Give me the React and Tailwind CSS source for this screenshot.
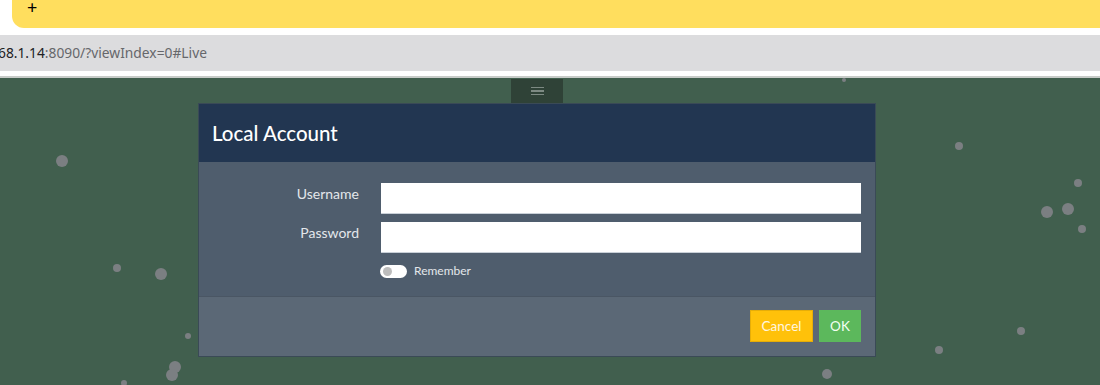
import React from "react";

const dots = [
  [62, 161, 6], [117, 268, 4], [161, 274, 6], [188, 336, 3], [175, 367, 6], [172, 375, 6],
  [124, 383, 3], [959, 146, 4], [1078, 183, 4], [1047, 212, 6], [1068, 209, 6], [1082, 229, 4],
  [1021, 331, 4], [939, 350, 4], [827, 374, 5], [844, 80, 2],
];

export default function App() {
  return (
    <div className="w-[1100px] h-[385px] overflow-hidden flex flex-col bg-white relative">
      <div className="h-[35px] bg-white pl-[12px] shrink-0">
        <div className="h-[28px] bg-[#ffde5e] rounded-bl-[12px] pl-[15px] flex items-start">
          <span className="text-[18px] leading-[15px] text-black font-['Noto_Sans',sans-serif]">+</span>
        </div>
      </div>
      <div className="h-[36px] bg-[#dcdcde] flex items-center shrink-0 font-['Noto_Sans',sans-serif] text-[13.8px] -ml-[2px]">
        <span className="text-[#202124]">68.1.14</span>
        <span className="text-[#66676b]">:8090/?viewIndex=0#Live</span>
      </div>
      <div className="h-[5px] bg-white shrink-0" />
      <div className="h-[2px] bg-[#c8ccc9] shrink-0" />
      <div className="flex-1 bg-[#415f4e] flex flex-col font-['Lato',sans-serif]">
        <div className="ml-[511px] mt-[1px] w-[52px] h-[24px] bg-[#2f4237] flex flex-col items-center justify-center gap-[2px]">
          <div className="w-[13px] h-[1.5px] bg-[#7d8a83]" />
          <div className="w-[13px] h-[1.5px] bg-[#7d8a83]" />
          <div className="w-[13px] h-[1.5px] bg-[#7d8a83]" />
        </div>
        <div className="ml-[198px] w-[678px] border border-[#3a4a56] flex flex-col relative z-10">
          <div className="h-[58px] bg-[#223651] flex items-center pl-[13px]">
            <span className="text-white text-[20.5px] font-medium">Local Account</span>
          </div>
          <div className="h-[134px] bg-[#4f5d6d] pt-[21px] flex flex-col">
            <div className="flex items-center h-[31px]">
              <div className="w-[160px] text-right text-[14px] text-[#e3e7eb] -mt-[10px]">Username</div>
              <div className="ml-[22px] w-[480px] h-[31px] bg-white border-b border-[#c9d0d8]" />
            </div>
            <div className="flex items-center h-[31px] mt-[8px]">
              <div className="w-[160px] text-right text-[14px] text-[#e3e7eb] -mt-[10px]">Password</div>
              <div className="ml-[22px] w-[480px] h-[31px] bg-white border-b border-[#c9d0d8]" />
            </div>
            <div className="flex items-center mt-[9px] ml-[181px]">
              <div className="w-[27px] h-[13px] rounded-full bg-white flex items-center pl-[3px]">
                <div className="w-[9px] h-[9px] rounded-full bg-[#bdbdbd]" />
              </div>
              <span className="ml-[7px] text-[12px] text-[#e3e7eb]">Remember</span>
            </div>
          </div>
          <div className="h-[60px] bg-[#5b6876] border-t border-[#4a5664] flex items-start justify-end pt-[13px] pr-[14px] gap-[6px]">
            <button className="w-[63px] h-[32px] bg-[#ffc10a] border border-[#e6ad08] text-[13.5px] text-[#fff6e0]">Cancel</button>
            <button className="w-[42px] h-[32px] bg-[#5cb85c] text-[13.5px] text-[#f2fff2]">OK</button>
          </div>
        </div>
      </div>
      {dots.map(([x, y, r], i) => (
        <div
          key={i}
          className="absolute rounded-full bg-[#7b7f82]"
          style={{ left: x - r, top: y - r, width: r * 2, height: r * 2 }}
        />
      ))}
    </div>
  );
}
